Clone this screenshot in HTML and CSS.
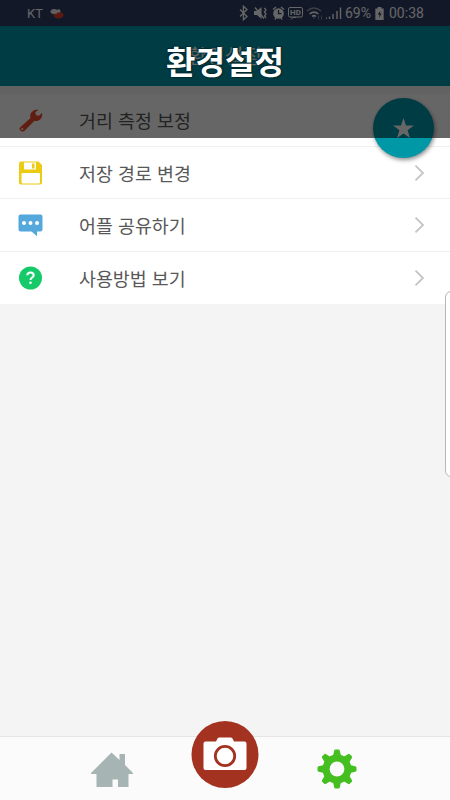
FILE: index.html
```html
<!DOCTYPE html>
<html lang="ko">
<head>
<meta charset="utf-8">
<title>환경설정</title>
<link rel="stylesheet" href="styles.css">
</head>
<body>
<div class="screen">
  <div class="status">
    <span class="carrier">KT</span>
    <svg class="pill" width="14" height="11" viewBox="0 0 14 11"><ellipse cx="8.5" cy="7" rx="5" ry="3.6" fill="#e0402e"/><ellipse cx="4.2" cy="3.4" rx="3.7" ry="2.5" fill="#eee"/><circle cx="8.8" cy="2.8" r="1.6" fill="#fff"/></svg>
    <svg class="sysicons" width="104" height="18" viewBox="0 0 104 18">
      <g fill="none" stroke="#fff" stroke-width="1.3">
        <path d="M1 5.500l7 7-3.600 3.200V2.300L8 5.500l-7 7"/>
        <path d="M16 3.500l9 11M25.500 4l1.500 2-1.500 2 1.500 2-1.500 2 1.500 2"/>
        <path d="M34 5.500l3-2.500M42 3l3 2.500"/>
        <rect x="49.500" y="3.500" width="14" height="9.500" rx="1.500" stroke-width="1"/>
        <path d="M52 15.500l2-2h3" stroke-width="1"/>
      </g>
      <path d="M15 7h3l4.500-4v12L18 11h-3z" fill="#fff"/>
      <circle cx="39.500" cy="9.500" r="5.300" fill="#fff"/><path d="M36 15.500l1-2M43 15.500l-1-2" stroke="#fff" stroke-width="1.500"/>
      <path d="M39.500 6v3.700h3" fill="none" stroke="#2e3c64" stroke-width="1.300"/>
      <text x="51" y="11.300" class="hd">HD</text>
      <g fill="none" stroke="#fff" stroke-width="1.500"><path d="M68 7q7-6 14 0" opacity=".5"/><path d="M70.500 10q4.500-3.800 9 0M73 12.500q2-1.700 4 0"/></g>
      <path d="M75 13v2M79.500 11.500v4M82.500 11.500v4" stroke="#fff" stroke-width="1.200" opacity=".4"/>
      <path d="M90.500 15v-2.500M94 15v-5M98 15V7M101.500 15V3.500" stroke="#fff" stroke-width="1.400"/>
      <path d="M87.500 15v-1.500" stroke="#fff"/>
    </svg>
    <span class="battery">69%</span>
    <svg class="cell" width="9" height="13" viewBox="0 0 9 14"><path d="M2.500 0h4v1.500H9V14H0V1.500h2.500z" fill="#fff"/><path d="M5.500 4L2.500 8h2L4 11.500l3-4.500H5z" fill="#2e3c64"/></svg>
    <span class="clock">00:38</span>
  </div>
  <header class="bar">환경설정</header>
  <main class="list">
    <div class="row">
      <svg class="ico" viewBox="0 0 24 24"><path d="M1.500 19.500L12 10q-1-3 .8-5.500Q15.500 1 20 1.700L16.800 4.200l.7 3 3 .5 3-3q1 4.500-2.200 7-2.600 2-5.300 1.100L5.800 23q-1.800 1.200-3.800-.2-1.600-1.700-.5-3.300z" fill="#f04a2c"/><circle cx="3.800" cy="21" r="1" fill="#fff"/></svg>
      <span class="label">거리 측정 보정</span>
    </div>
    <div class="row">
      <svg class="ico" viewBox="0 0 24 24"><path d="M2.500.5H20L23.500 4v17.500q0 2-2 2h-19q-2 0-2-2v-19q0-2 2-2z" fill="#eccb13"/><path d="M5.500 1.500h12v6q0 1-1 1h-10q-1 0-1-1zM4 12h16.500q1 0 1 1v8.500q0 1-1 1H4q-1 0-1-1V13q0-1 1-1z" fill="#fff"/><rect x="13.500" y="2.500" width="2.500" height="5" fill="#eccb13"/></svg>
      <span class="label">저장 경로 변경</span>
      <svg class="go" viewBox="0 0 10 16"><path d="M1 .7L8.500 8 1 15.300"/></svg>
    </div>
    <div class="row">
      <svg class="ico" viewBox="0 0 24 24"><path d="M2 1.500h20q2 0 2 2v13q0 2-2 2h-3.500v4.700l-5.500-4.700H2q-2 0-2-2v-13q0-2 2-2z" fill="#55a8dc"/><g fill="#fff"><circle cx="5.500" cy="10" r="2"/><circle cx="12" cy="10" r="2"/><circle cx="18.500" cy="10" r="2"/></g></svg>
      <span class="label">어플 공유하기</span>
      <svg class="go" viewBox="0 0 10 16"><path d="M1 .7L8.500 8 1 15.300"/></svg>
    </div>
    <div class="row">
      <svg class="ico" viewBox="0 0 24 24"><circle cx="12" cy="12" r="11.500" fill="#16ca69"/><path d="M8.800 9.300q.2-2.800 3.200-2.800t3.200 2.600q0 1.600-1.700 2.500-1.500.8-1.500 2.400" fill="none" stroke="#fff" stroke-width="2.100"/><circle cx="12" cy="16.700" r="1.300" fill="#fff"/></svg>
      <span class="label">사용방법 보기</span>
      <svg class="go" viewBox="0 0 10 16"><path d="M1 .7L8.500 8 1 15.300"/></svg>
    </div>
  </main>
  <nav class="tabs">
    <svg class="home" width="42" height="36" viewBox="0 0 42 36"><path d="M20.500.5L28.500 8V2h5.500v11l8 8v1h-4.500v13H27v-7.500h-5.500V35H5.500V22H0v-1z" fill="#a6b5b3"/></svg>
    <svg class="camera" width="68" height="68" viewBox="0 0 68 68"><circle cx="34" cy="33.500" r="33.500" fill="#a43221"/><path d="M14.500 20.500H25l1.500-3q.5-1 2-1h11q1.500 0 2 1l1.500 3h10.500q2 0 2 2V47q0 2-2 2h-39q-2 0-2-2V22.500q0-2 2-2z" fill="#fff"/><circle cx="34" cy="35" r="9.700" fill="#fff" stroke="#a43221" stroke-width="2.800"/></svg>
    <svg class="gear" width="40" height="40" viewBox="-20 -20 40 40"><g fill="#45be20"><circle r="14.500"/><g id="teeth"><path id="tooth" d="M-4-13l1.200-5.200q.3-1.300 1.300-1.300h3q1 0 1.300 1.300L4-13z"/><use href="#tooth" transform="rotate(45)"/><use href="#tooth" transform="rotate(90)"/><use href="#tooth" transform="rotate(135)"/></g><use href="#teeth" transform="rotate(180)"/></g><circle r="7.400" fill="#fbfbfb"/></svg>
  </nav>
  <div class="edge"></div>
  <button class="fab" aria-label="star"><svg width="21" height="20" viewBox="0 0 24 23"><path d="M12 0l2.900 8.500 9.100.2-7.300 5.500L19.400 23 12 17.800 4.600 23l2.700-8.800L0 8.700l9.100-.2z" fill="#fff"/></svg></button>
  <div class="shade"><span class="caption">환경설정</span></div>
</div>
</body>
</html>
```

FILE: styles.css
```css
body {
  margin: 0;
  font-family: "Noto Sans CJK KR", "Noto Sans", sans-serif;
}
.screen {
  position: relative;
  display: flex;
  flex-direction: column;
  width: 450px;
  height: 800px;
  overflow: hidden;
  background: #f4f4f4;
}
.status {
  display: flex;
  align-items: center;
  box-sizing: border-box;
  height: 26px;
  padding: 0 26px 0 27px;
  background: #2e3c64;
  color: #fff;
  font: 14px Roboto, sans-serif;
}
.carrier {
  width: 23px;
  font-size: 13px;
}
.sysicons {
  margin-left: auto;
}
.hd {
  font: bold 8px Roboto, sans-serif;
  fill: #fff;
}
.battery {
  width: 27px;
  margin-left: 2px;
}
.cell {
  margin: 0 5px 0 3px;
}
.clock {
  width: 35px;
}
.bar {
  height: 60px;
  background: #0097a7;
  color: #fff;
  font-size: 20px;
  line-height: 60px;
  text-align: center;
}
.list {
  margin-top: 8px;
}
.row {
  display: flex;
  align-items: center;
  box-sizing: border-box;
  height: 52.5px;
  padding: 1px 25px 0 18px;
  border-bottom: 1px solid #efefef;
  background: #fff;
}
.row:last-child {
  border-bottom: 0;
}
.ico {
  width: 25px;
  height: 24px;
}
.label {
  flex: 1;
  margin-left: 36px;
  color: #585858;
  font-size: 18.400px;
  line-height: 28px;
}
.go {
  width: 11px;
  height: 16px;
}
.go path {
  fill: none;
  stroke: #c4c4c4;
  stroke-width: 1.800;
}
.tabs {
  display: flex;
  align-items: flex-start;
  box-sizing: border-box;
  height: 64px;
  margin-top: auto;
  padding: 0 92px 0 91px;
  border-top: 1px solid #e4e4e4;
  background: #fbfbfb;
}
.home {
  margin-top: 15px;
}
.camera {
  margin: -16px 0 0 58px;
}
.gear {
  margin: 12px 0 0 58px;
}
.edge {
  position: absolute;
  top: 291px;
  right: -8px;
  box-sizing: border-box;
  width: 13px;
  height: 186px;
  border: 1px solid #b8b8b8;
  border-radius: 6px;
  background: #fff;
}
.fab {
  position: absolute;
  top: 98px;
  left: 373px;
  display: flex;
  align-items: center;
  justify-content: center;
  width: 61px;
  height: 60px;
  padding: 0;
  border: 0;
  border-radius: 50%;
  background: #0097a7;
  box-shadow: 1px 2px 4px rgba(0, 0, 0, .45);
}
.shade {
  position: absolute;
  top: 0;
  left: 0;
  width: 450px;
  height: 137.500px;
  background: rgba(0, 0, 0, .6);
  text-align: center;
}
.caption {
  display: block;
  padding-top: 37px;
  color: #fff;
  font-size: 32px;
  font-weight: 700;
  line-height: 46px;
  text-shadow: 0 0 2px #002a30, 1px 1px 1px #002a30, -1px -1px 1px #002a30;
}
```
